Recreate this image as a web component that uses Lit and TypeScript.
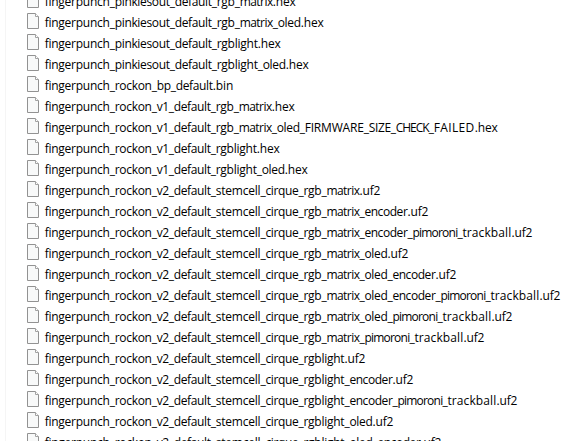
import { LitElement, html, css } from "lit";
import { customElement } from "lit/decorators.js";

const NAMES = [
  "fingerpunch_pinkiesout_default_rgb_matrix.hex",
  "fingerpunch_pinkiesout_default_rgb_matrix_oled.hex",
  "fingerpunch_pinkiesout_default_rgblight.hex",
  "fingerpunch_pinkiesout_default_rgblight_oled.hex",
  "fingerpunch_rockon_bp_default.bin",
  "fingerpunch_rockon_v1_default_rgb_matrix.hex",
  "fingerpunch_rockon_v1_default_rgb_matrix_oled_FIRMWARE_SIZE_CHECK_FAILED.hex",
  "fingerpunch_rockon_v1_default_rgblight.hex",
  "fingerpunch_rockon_v1_default_rgblight_oled.hex",
  "fingerpunch_rockon_v2_default_stemcell_cirque_rgb_matrix.uf2",
  "fingerpunch_rockon_v2_default_stemcell_cirque_rgb_matrix_encoder.uf2",
  "fingerpunch_rockon_v2_default_stemcell_cirque_rgb_matrix_encoder_pimoroni_trackball.uf2",
  "fingerpunch_rockon_v2_default_stemcell_cirque_rgb_matrix_oled.uf2",
  "fingerpunch_rockon_v2_default_stemcell_cirque_rgb_matrix_oled_encoder.uf2",
  "fingerpunch_rockon_v2_default_stemcell_cirque_rgb_matrix_oled_encoder_pimoroni_trackball.uf2",
  "fingerpunch_rockon_v2_default_stemcell_cirque_rgb_matrix_oled_pimoroni_trackball.uf2",
  "fingerpunch_rockon_v2_default_stemcell_cirque_rgb_matrix_pimoroni_trackball.uf2",
  "fingerpunch_rockon_v2_default_stemcell_cirque_rgblight.uf2",
  "fingerpunch_rockon_v2_default_stemcell_cirque_rgblight_encoder.uf2",
  "fingerpunch_rockon_v2_default_stemcell_cirque_rgblight_encoder_pimoroni_trackball.uf2",
  "fingerpunch_rockon_v2_default_stemcell_cirque_rgblight_oled.uf2",
  "fingerpunch_rockon_v2_default_stemcell_cirque_rgblight_oled_encoder.uf2",
];

// Advance width in pixels of each part of a name.
const ADVANCE: Record<string, number> = {
  _: 5,
  fingerpunch: 65,
  pinkiesout: 55,
  rockon: 37,
  bp: 14,
  v1: 12,
  v2: 12,
  default: 37,
  stemcell: 44.7,
  cirque: 33,
  rgb: 18,
  matrix: 33,
  rgblight: 41,
  oled: 23,
  encoder: 43,
  pimoroni: 45,
  trackball: 49,
  FIRMWARE: 59,
  SIZE: 22,
  CHECK: 33,
  FAILED: 41,
  ".hex": 23,
  ".bin": 20.5,
  ".uf2": 21,
};

const split = (name: string) => name.match(/_|\.\w+|[^_.]+/g) ?? [];

@customElement("app-root")
export class AppRoot extends LitElement {
  static styles = css`
    :host {
      display: flex;
      width: 584px;
      height: 441px;
      overflow: hidden;
      background: #fff;
      color: #000;
      font: 12px/21px "Open Sans", "Noto Sans", sans-serif;
    }
    .edge {
      flex: none;
      width: 5px;
      border-right: 1px solid #f5f5f5;
    }
    .list {
      margin: -10px 0 0 21px;
      padding: 0;
      list-style: none;
    }
    .row {
      display: flex;
      align-items: flex-start;
      gap: 5.7px;
      height: 21px;
      white-space: nowrap;
    }
    .icon {
      flex: none;
      display: block;
      width: 12px;
      height: 16px;
      margin-top: 2px;
    }
    .name {
      display: block;
      margin-top: 1px;
      font-kerning: none;
      font-variant-ligatures: none;
    }
  `;

  // Spread the letters of each part so that it fills its advance width.
  firstUpdated() {
    const parts = [...this.renderRoot.querySelectorAll<HTMLElement>(".part")];
    const natural = parts.map((el) => el.getBoundingClientRect().width);
    parts.forEach((el, i) => {
      const text = el.textContent ?? "";
      el.style.letterSpacing = `${(ADVANCE[text] - natural[i]) / text.length}px`;
    });
  }

  render() {
    return html`
      <div class="edge"></div>
      <ul class="list">
        ${NAMES.map(
          (name) => html`
            <li class="row">
              <svg class="icon" viewBox="0 0 12 16">
                <path d="M.5 .5H8.5L11.5 3.5V15.5H.5Z" fill="#f8f9f9" stroke="#929292" />
                <path d="M8.5 .5V3.5H11.5" fill="#fff" stroke="#a2a2a2" />
              </svg>
              <span class="name">${split(name).map((part) => html`<span class="part">${part}</span>`)}</span>
            </li>
          `
        )}
      </ul>
    `;
  }
}
